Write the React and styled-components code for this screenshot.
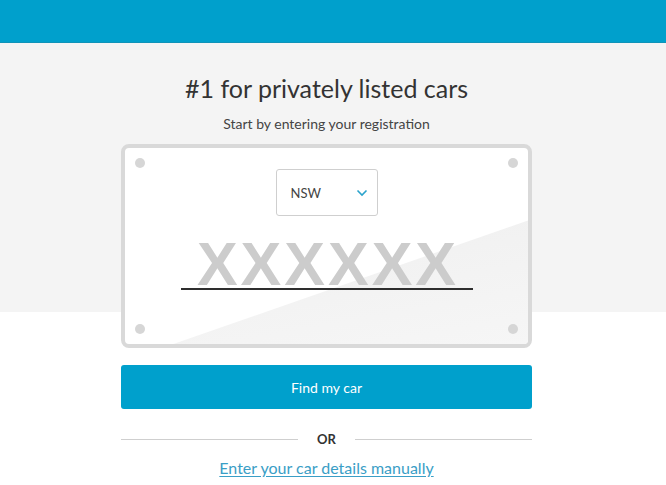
import React from "react";
import styled, { createGlobalStyle } from "styled-components";

const Global = createGlobalStyle`
  html, body { margin: 0; padding: 0; background: #ffffff; }
  body { font-family: Lato, "Open Sans", sans-serif; color: #333; }
`;

const TopBar = styled.div`
  height: 42px;
  background: #00a0cc;
  border-bottom: 1px solid #0f93b8;
`;

const Hero = styled.section`
  background: #f4f4f4;
  height: 269px;
  padding-right: 13px;
  display: flex;
  flex-direction: column;
  align-items: center;
`;

const Title = styled.h1`
  margin: 30px 0 0;
  font-size: 25px;
  font-weight: 400;
  color: #333;
  line-height: 30px;
`;

const Subtitle = styled.p`
  margin: 12px 0 0;
  font-size: 14px;
  color: #444;
  line-height: 18px;
`;

const Content = styled.div`
  padding-right: 13px;
`;

const Main = styled.div`
  width: 411px;
  margin: -168px auto 0;
  display: flex;
  flex-direction: column;
  align-items: stretch;
`;

const Plate = styled.div`
  position: relative;
  height: 196px;
  border: 4px solid #d9d9d9;
  border-radius: 8px;
  box-shadow: inset 0 0 0 1px #fff;
  background: #ffffff;
  display: flex;
  flex-direction: column;
  align-items: center;
  &::before {
    content: "";
    position: absolute;
    inset: 0;
    border-radius: 4px;
    background: linear-gradient(170deg, #ececec 0%, #f6f6f6 100%);
    clip-path: polygon(12% 100%, 100% 37%, 100% 100%);
  }
`;

const Bolt = styled.span`
  position: absolute;
  width: 10px;
  height: 10px;
  border-radius: 50%;
  background: #d6d6d6;
  ${(p) => (p.$top ? "top: 10px;" : "bottom: 10px;")}
  ${(p) => (p.$left ? "left: 10px;" : "right: 10px;")}
`;

const Select = styled.div`
  position: relative;
  margin-top: 21px;
  width: 102px;
  height: 47px;
  box-sizing: border-box;
  border: 1px solid #cfcfcf;
  border-radius: 3px;
  background: #fff;
  display: flex;
  align-items: center;
  justify-content: space-between;
  padding: 0 9px 0 14px;
  font-size: 13px;
  color: #444;
`;

const RegText = styled.div`
  position: relative;
  margin-top: 23px;
  font-family: "Liberation Sans", Arial, sans-serif;
  font-weight: 700;
  font-size: 61px;
  line-height: 50px;
  height: 50px;
  letter-spacing: 3px;
  padding-left: 3px;
  color: #cccccc;
`;

const Underline = styled.div`
  position: relative;
  width: 292px;
  height: 2px;
  background: #2e2e2e;
  margin-top: -1px;
`;

const Button = styled.button`
  margin-top: 17px;
  height: 44px;
  border: none;
  border-radius: 3px;
  background: #00a0cc;
  color: #fff;
  font-family: inherit;
  font-size: 14px;
  cursor: pointer;
`;

const OrRow = styled.div`
  margin-top: 22px;
  display: flex;
  align-items: center;
  gap: 16px;
  font-size: 13px;
  font-weight: 700;
  color: #333;
`;

const Rule = styled.span`
  flex: 1;
  height: 1px;
  background: #cfcfcf;
`;

const OrLabel = styled.span`
  width: 25px;
  text-align: center;
`;

const Link = styled.a`
  margin-top: 11px;
  align-self: center;
  font-size: 16px;
  color: #3a9ec6;
  text-decoration: underline;
  text-underline-offset: 2px;
`;

export default function App() {
  return (
    <>
      <Global />
      <TopBar />
      <Hero>
        <Title>#1 for privately listed cars</Title>
        <Subtitle>Start by entering your registration</Subtitle>
      </Hero>
      <Content>
        <Main>
          <Plate>
            <Bolt $top $left />
            <Bolt $top />
            <Bolt $left />
            <Bolt />
            <Select>
              <span>NSW</span>
              <svg width="12" height="8" viewBox="0 0 12 8">
                <path d="M1.5 1.5 L6 6 L10.5 1.5" fill="none" stroke="#2aa3cc" strokeWidth="1.6" />
              </svg>
            </Select>
            <RegText>XXXXXX</RegText>
            <Underline />
          </Plate>
          <Button>Find my car</Button>
          <OrRow>
            <Rule />
            <OrLabel>OR</OrLabel>
            <Rule />
          </OrRow>
          <Link href="#">Enter your car details manually</Link>
        </Main>
      </Content>
    </>
  );
}
